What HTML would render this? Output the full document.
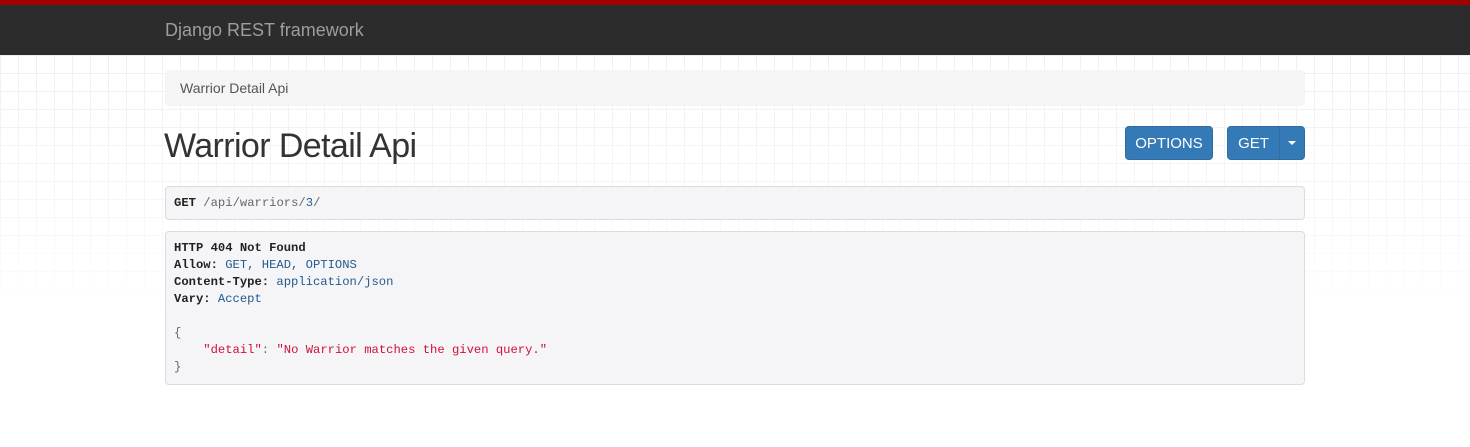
<!DOCTYPE html>
<html><head><style>
body{margin:0;width:1470px;height:447px;overflow:hidden;font-family:"Liberation Sans",sans-serif;background:#fff;position:relative}
.grid{position:absolute;left:0;top:55px;width:1470px;height:392px;background-image:linear-gradient(#f0f0f0 1px,transparent 1px),linear-gradient(90deg,#f0f0f0 1px,transparent 1px);background-size:18px 18px;-webkit-mask-image:linear-gradient(#000 0,rgba(0,0,0,.6) 150px,transparent 260px)}
.red{position:absolute;top:0;left:0;width:1470px;height:5px;background:#a30000}
.nav{position:absolute;top:5px;left:0;width:1470px;height:50px;background:#2c2c2c}
.brand{position:absolute;left:165px;top:15px;color:#9d9d9d;font-size:18px}
.bc{position:absolute;left:165px;top:70px;width:1140px;height:36px;background:#f5f5f5;border-radius:4px;color:#555;font-size:14px;line-height:36px;box-sizing:border-box;padding-left:15px}
h1{position:absolute;left:164px;top:127px;margin:0;font-weight:300;font-size:34px;color:#333;letter-spacing:-0.6px}
.btn{position:absolute;top:126px;height:34px;background:#337ab7;border:1px solid #2e6da4;box-sizing:border-box;color:#fff;font-size:15px;line-height:34px;text-align:center;border-radius:4px}
pre{position:absolute;left:165px;width:1140px;box-sizing:border-box;margin:0;background:#f5f5f7;border:1px solid #dcdce0;border-radius:4px;font-family:"Liberation Mono",monospace;font-size:12.2px;line-height:17px;padding:8px 8px;color:#333}
b{font-weight:bold;color:#222}.p{color:#245a8d}.g{color:#666}.s{color:#d0103a}
</style></head><body>
<div class="grid"></div>
<div class="red"></div><div class="nav"><div class="brand">Django REST framework</div></div>
<div class="bc">Warrior Detail Api</div>
<h1>Warrior Detail Api</h1>
<div class="btn" style="left:1125px;width:88px">OPTIONS</div>
<div class="btn" style="left:1227px;width:53px;border-radius:4px 0 0 4px">GET</div>
<div class="btn" style="left:1279px;width:26px;border-radius:0 4px 4px 0;line-height:32px"><span style="display:inline-block;border-left:4px solid transparent;border-right:4px solid transparent;border-top:4px solid #fff;vertical-align:middle"></span></div>
<pre style="top:186px;height:34px"><b>GET</b> <span class="g">/</span><span class="g">api</span><span class="g">/</span><span class="g">warriors</span><span class="g">/</span><span class="p">3</span><span class="g">/</span></pre>
<pre style="top:231px;height:154px"><b>HTTP 404 Not Found</b>
<b>Allow:</b> <span class="p">GET, HEAD, OPTIONS</span>
<b>Content-Type:</b> <span class="p">application/json</span>
<b>Vary:</b> <span class="p">Accept</span>

<span class="g">{</span>
    <span class="s">"detail"</span><span class="g">:</span> <span class="s">"No Warrior matches the given query."</span>
<span class="g">}</span></pre>
</body></html>
